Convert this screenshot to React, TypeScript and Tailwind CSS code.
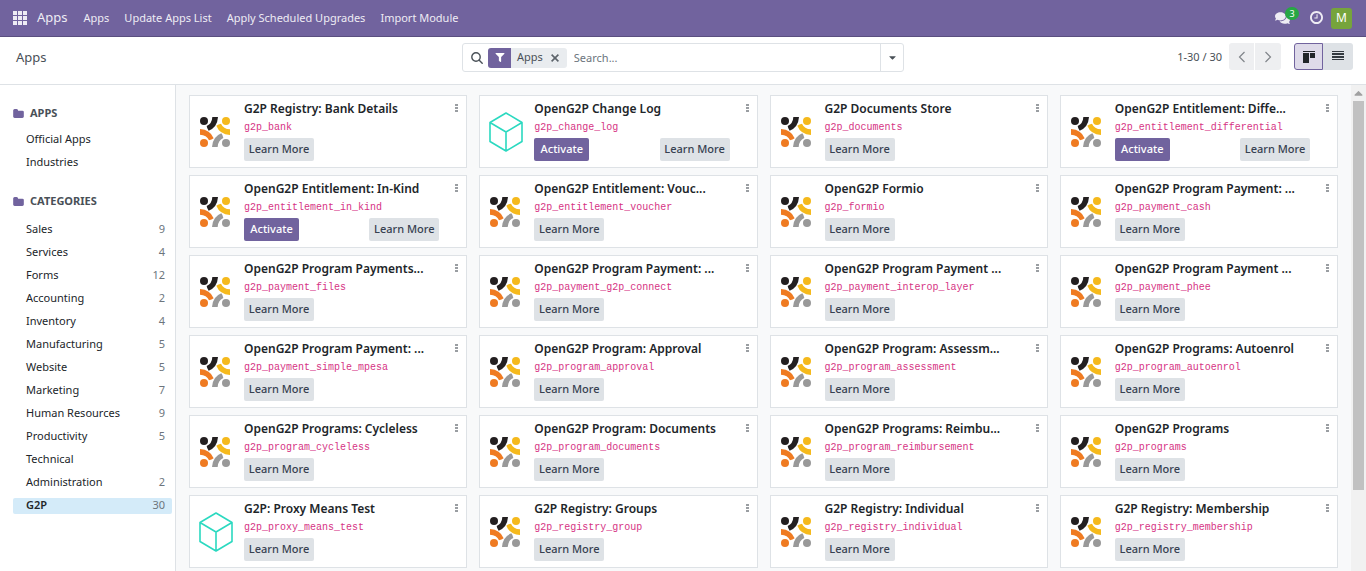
import React from "react";
import { FaComments, FaFilter, FaCaretDown, FaCaretUp } from "react-icons/fa";

type AppCard = { title: string; code: string; cube?: boolean; activate?: boolean };

const cards: AppCard[] = [
  { title: "G2P Registry: Bank Details", code: "g2p_bank" },
  { title: "OpenG2P Change Log", code: "g2p_change_log", cube: true, activate: true },
  { title: "G2P Documents Store", code: "g2p_documents" },
  { title: "OpenG2P Entitlement: Diffe...", code: "g2p_entitlement_differential", activate: true },
  { title: "OpenG2P Entitlement: In-Kind", code: "g2p_entitlement_in_kind", activate: true },
  { title: "OpenG2P Entitlement: Vouc...", code: "g2p_entitlement_voucher" },
  { title: "OpenG2P Formio", code: "g2p_formio" },
  { title: "OpenG2P Program Payment: ...", code: "g2p_payment_cash" },
  { title: "OpenG2P Program Payments...", code: "g2p_payment_files" },
  { title: "OpenG2P Program Payment: ...", code: "g2p_payment_g2p_connect" },
  { title: "OpenG2P Program Payment ...", code: "g2p_payment_interop_layer" },
  { title: "OpenG2P Program Payment ...", code: "g2p_payment_phee" },
  { title: "OpenG2P Program Payment: ...", code: "g2p_payment_simple_mpesa" },
  { title: "OpenG2P Program: Approval", code: "g2p_program_approval" },
  { title: "OpenG2P Program: Assessm...", code: "g2p_program_assessment" },
  { title: "OpenG2P Programs: Autoenrol", code: "g2p_program_autoenrol" },
  { title: "OpenG2P Programs: Cycleless", code: "g2p_program_cycleless" },
  { title: "OpenG2P Program: Documents", code: "g2p_program_documents" },
  { title: "OpenG2P Programs: Reimbu...", code: "g2p_program_reimbursement" },
  { title: "OpenG2P Programs", code: "g2p_programs" },
  { title: "G2P: Proxy Means Test", code: "g2p_proxy_means_test", cube: true },
  { title: "G2P Registry: Groups", code: "g2p_registry_group" },
  { title: "G2P Registry: Individual", code: "g2p_registry_individual" },
  { title: "G2P Registry: Membership", code: "g2p_registry_membership" },
];

const categories: { name: string; count?: number }[] = [
  { name: "Sales", count: 9 },
  { name: "Services", count: 4 },
  { name: "Forms", count: 12 },
  { name: "Accounting", count: 2 },
  { name: "Inventory", count: 4 },
  { name: "Manufacturing", count: 5 },
  { name: "Website", count: 5 },
  { name: "Marketing", count: 7 },
  { name: "Human Resources", count: 9 },
  { name: "Productivity", count: 5 },
  { name: "Technical" },
  { name: "Administration", count: 2 },
  { name: "G2P", count: 30 },
];

const logoArms = [
  { angle: 0, color: "#231f20" },
  { angle: 90, color: "#f5b91c" },
  { angle: 180, color: "#999999" },
  { angle: 270, color: "#ef7b22" },
];

function G2PLogo() {
  return (
    <svg viewBox="0 0 90 90" className="ml-[10px] h-[30px] w-[30px]" aria-hidden="true">
      {logoArms.map(({ angle, color }) => (
        <g key={angle} transform={`rotate(${angle} 45 45)`} fill={color}>
          <circle cx="12" cy="12" r="12" />
          <path d="M37 0H54Q52 31 26 41Q21 35 20 27Q36 20 37 0Z" />
        </g>
      ))}
    </svg>
  );
}

function CubeIcon() {
  return (
    <svg viewBox="0 0 34 40" className="ml-[9px] h-[40px] w-[34px]" fill="none" stroke="#2bd9c0" strokeWidth="1.6" strokeLinejoin="round" aria-hidden="true">
      <path d="M17 1L33 10.5V29.5L17 39L1 29.5V10.5ZM1 10.5L17 20L33 10.5M17 20V39" />
    </svg>
  );
}

function FolderIcon() {
  return (
    <svg viewBox="0 128 1664 1408" className="h-[9px] w-[11px]" fill="#71639e" aria-hidden="true">
      <path d="M1664 608v704q0 92-66 158t-158 66h-1216q-92 0-158-66t-66-158v-960q0-92 66-158t158-66h320q92 0 158 66t66 158v32h672q92 0 158 66t66 158z" />
    </svg>
  );
}

function ClockIcon() {
  return (
    <svg viewBox="0 128 1536 1536" className="h-[13px] w-[13px]" fill="currentColor" aria-hidden="true">
      <path d="M896 544v448q0 14-9 23t-23 9h-320q-14 0-23-9t-9-23v-64q0-14 9-23t23-9h224v-352q0-14 9-23t23-9h64q14 0 23 9t9 23zm416 352q0-148-73-273t-198-198-273-73-273 73-198 198-73 273 73 273 198 198 273 73 273-73 198-198 73-273zm224 0q0 209-103 385.5t-279.5 279.5-385.5 103-385.5-103-279.5-279.5-103-385.5 103-385.5 279.5-279.5 385.5-103 385.5 103 279.5 279.5 103 385.5z" />
    </svg>
  );
}

function SectionTitle({ children }: { children: React.ReactNode }) {
  return (
    <h2 className="flex h-[23px] items-center gap-[6px] pl-[13px] text-[11px] font-bold text-[#495057]">
      <FolderIcon />
      {children}
    </h2>
  );
}

function Card({ card }: { card: AppCard }) {
  return (
    <article className="flex border border-[#dee2e6] bg-white pb-[6px] pt-[3px]">
      <div className="flex w-[51px] shrink-0 items-center pt-[3px]">{card.cube ? <CubeIcon /> : <G2PLogo />}</div>
      <div className="ml-[3px] min-w-0 flex-1">
        <h3 className="whitespace-nowrap text-[12px] font-semibold leading-[20px] text-[#212529]">{card.title}</h3>
        <code className="block font-['Liberation_Mono',monospace] text-[10px] leading-[17px] text-[#d63384]">{card.code}</code>
        <div className="mt-[2px] flex justify-between">
          {card.activate && (
            <button className="h-[23px] w-[55px] rounded-[2px] bg-[#71639e] text-[11px] font-medium text-white">Activate</button>
          )}
          <button className="h-[23px] w-[70px] rounded-[2px] bg-[#dee2e6] text-[11px] font-medium text-[#374151]">Learn More</button>
        </div>
      </div>
      <div className="w-[27px] shrink-0">
        <button aria-label="Options" className="ml-[15px] mt-[5px] block h-[12px] w-[6px]">
          <svg viewBox="0 0 6 12" className="h-[12px] w-[6px]" fill="#9a9ea2">
            <rect x="1" y="0" width="3" height="2" />
            <rect x="1" y="3" width="3" height="2" />
            <rect x="1" y="6" width="3" height="2" />
          </svg>
        </button>
      </div>
    </article>
  );
}

export default function App() {
  return (
    <div className="flex h-screen flex-col overflow-hidden bg-white font-['Noto_Sans','Open_Sans',sans-serif] text-[11px] text-[#212529]">
      <header className="flex h-[37px] shrink-0 items-center border-b border-[#5a4f7f] bg-[#71639e] pl-[13px] pr-[14px] text-[#eeecf4]">
        <button aria-label="Home menu" className="mr-[10px]">
          <svg viewBox="0 0 14 14" className="h-[14px] w-[14px]" fill="currentColor">
            {[0, 5, 10].map((y) => [0, 5, 10].map((x) => <rect key={`${x}-${y}`} x={x} y={y} width="4" height="4" />))}
          </svg>
        </button>
        <a href="#" className="mr-[16px] text-[13px]">Apps</a>
        <nav className="flex flex-1 gap-[15px]">
          <a href="#">Apps</a>
          <a href="#">Update Apps List</a>
          <a href="#">Apply Scheduled Upgrades</a>
          <a href="#">Import Module</a>
        </nav>
        <button aria-label="Messages" className="relative mr-[19px] flex h-[20px] w-[16px] items-center">
          <FaComments className="h-[14px] w-[15px]" />
          <span className="absolute left-[10px] top-[-1px] flex h-[13px] w-[14px] items-center justify-center rounded-full bg-[#28a745] text-[9px] text-white">3</span>
        </button>
        <button aria-label="Activities" className="mr-[8px] pb-[2px]"><ClockIcon /></button>
        <button aria-label="User menu" className="flex h-[21px] w-[21px] items-center justify-center rounded-[3px] bg-[#76a43c] text-[12px] text-white">M</button>
      </header>

      <div className="flex h-[48px] shrink-0 border-b border-[#dee2e6] px-[13px] pt-[6px]">
        <h1 className="flex-1 text-[13px] leading-[29px] text-[#495057]"><span className="pl-[3px]">Apps</span></h1>
        <div className="flex h-[29px] w-[442px] items-center rounded-[3px] border border-[#dee2e6] pl-[8px]">
          <svg viewBox="0 0 12 12" className="mr-[5px] h-[12px] w-[12px]" fill="none" stroke="#495057" strokeWidth="1.4" strokeLinecap="round" aria-hidden="true">
            <circle cx="5" cy="5" r="4.2" />
            <path d="M8 8L11.2 11.2" />
          </svg>
          <div className="mr-[7px] flex h-[20px] items-center overflow-hidden rounded-[3px] bg-[#e9ecef]">
            <span className="flex h-full w-[23px] items-center justify-center bg-[#71639e] text-white"><FaFilter className="h-[9px] w-[10px]" /></span>
            <span className="pl-[6px] text-[#495057]">Apps</span>
            <button aria-label="Remove filter" className="px-[8px]">
              <svg viewBox="0 0 8 8" className="h-[8px] w-[8px]" stroke="#5c636a" strokeWidth="1.6"><path d="M.6 .6L7.4 7.4M7.4 .6L.6 7.4" /></svg>
            </button>
          </div>
          <input aria-label="Search" placeholder="Search..." className="h-full min-w-0 flex-1 outline-none placeholder:text-[#6c757d]" />
          <button aria-label="Search options" className="flex h-full w-[23px] items-center justify-center border-l border-[#dee2e6] text-[#495057]"><FaCaretDown className="h-[11px] w-[11px]" /></button>
        </div>
        <div className="flex flex-1 justify-end">
          <span className="mr-[7px] leading-[27px] text-[#495057]">1-30 / 30</span>
          <div className="mr-[13px] flex h-[27px] gap-px">
            <button aria-label="Previous" className="flex w-[25px] items-center justify-center rounded-l-[3px] bg-[#eeeff1]">
              <svg viewBox="0 0 8 12" className="h-[12px] w-[8px]" fill="none" stroke="#80858a" strokeWidth="1.2"><path d="M6.5 1L1.5 6L6.5 11" /></svg>
            </button>
            <button aria-label="Next" className="flex w-[26px] items-center justify-center rounded-r-[3px] bg-[#eeeff1]">
              <svg viewBox="0 0 8 12" className="h-[12px] w-[8px]" fill="none" stroke="#80858a" strokeWidth="1.2"><path d="M1.5 1L6.5 6L1.5 11" /></svg>
            </button>
          </div>
          <div className="flex h-[27px]">
            <button aria-label="Kanban view" className="flex w-[29px] items-center justify-center rounded-l-[3px] border border-[#71639e] bg-[#dedae9]">
              <svg viewBox="0 0 12 12" className="h-[12px] w-[12px]" fill="#212529"><rect width="12" height="1" /><rect y="2" width="6" height="10" /><rect x="7" y="2" width="5" height="5" /></svg>
            </button>
            <button aria-label="List view" className="flex w-[30px] items-center justify-center rounded-r-[3px] bg-[#dee2e6] pb-[1px]">
              <svg viewBox="0 0 12 10" className="h-[10px] w-[12px]" fill="#343a40"><rect y="0" width="12" height="1" /><rect y="2" width="12" height="2" /><rect y="5" width="12" height="2" /><rect y="8" width="12" height="1" /></svg>
            </button>
          </div>
        </div>
      </div>

      <div className="flex min-h-0 flex-1">
        <aside className="w-[176px] shrink-0 border-r border-[#dee2e6] pr-[3px] pt-[17px]">
          <SectionTitle>APPS</SectionTitle>
          <ul className="mb-[17px] mt-[2px]">
            {["Official Apps", "Industries"].map((name) => (
              <li key={name}><a href="#" className="block pl-[26px] leading-[23px]">{name}</a></li>
            ))}
          </ul>
          <SectionTitle>CATEGORIES</SectionTitle>
          <ul className="mt-[5px]">
            {categories.map(({ name, count }) => (
              <li key={name} className="flex h-[23px] items-center pl-[13px]">
                <a href="#" className={name === "G2P" ? "flex h-[16px] flex-1 items-center justify-between rounded-[2px] bg-[#d4ebf9] pl-[13px] pr-[7px] font-semibold" : "flex h-[16px] flex-1 items-center justify-between pl-[13px] pr-[7px]"}>
                  <span>{name}</span>
                  <span className="font-normal text-[#6c757d]">{count}</span>
                </a>
              </li>
            ))}
          </ul>
        </aside>
        <main className="min-w-0 flex-1 overflow-hidden bg-[#f8f9fa] px-[13px] pt-[10px]">
          <div className="grid grid-cols-4 gap-x-[12px] gap-y-[7px]">
            {cards.map((card) => <Card key={card.code} card={card} />)}
          </div>
        </main>
        <div className="flex w-[15px] shrink-0 flex-col items-center bg-[#f1f1f1]" aria-hidden="true">
          <FaCaretUp className="mb-[1px] mt-[1px] h-[14px] w-[11px] text-[#a0a0a0]" />
          <div className="h-[80%] w-[11px] bg-[#c1c1c1]" />
        </div>
      </div>
    </div>
  );
}
